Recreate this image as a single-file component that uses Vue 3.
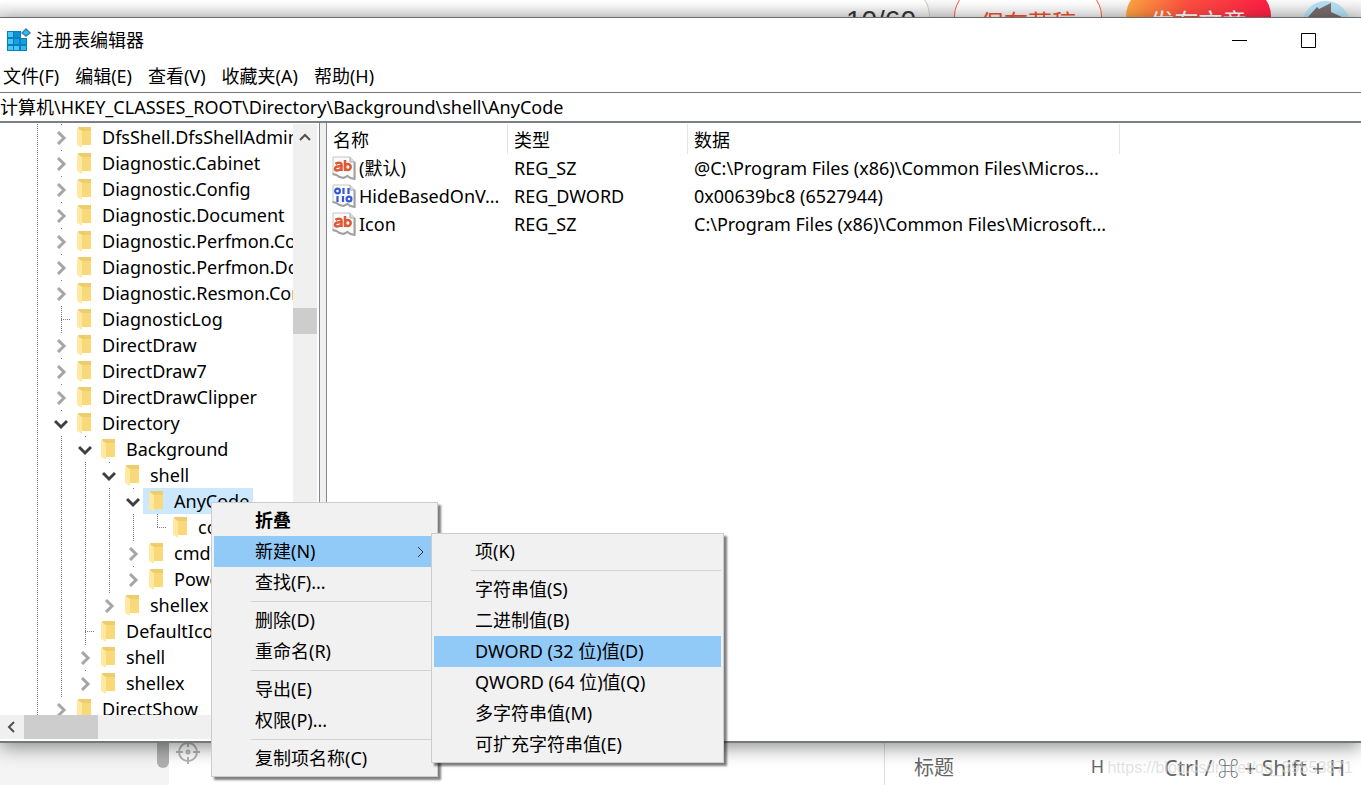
<script setup>
const menus = ['文件(F)', '编辑(E)', '查看(V)', '收藏夹(A)', '帮助(H)']

// guides: one entry per ancestor column that carries a dotted line
const tree = [
  ...['DfsShell.DfsShellAdmin', 'Diagnostic.Cabinet', 'Diagnostic.Config', 'Diagnostic.Document',
    'Diagnostic.Perfmon.Config', 'Diagnostic.Perfmon.Document', 'Diagnostic.Resmon.Config']
    .map((name) => ({ name, guides: 1, state: 'closed' })),
  { name: 'DiagnosticLog', guides: 1, state: 'leaf' },
  { name: 'DirectDraw', guides: 1, state: 'closed' },
  { name: 'DirectDraw7', guides: 1, state: 'closed' },
  { name: 'DirectDrawClipper', guides: 1, state: 'closed' },
  { name: 'Directory', guides: 1, state: 'open' },
  { name: 'Background', guides: 2, state: 'open' },
  { name: 'shell', guides: 3, state: 'open' },
  { name: 'AnyCode', guides: 4, state: 'open', selected: true },
  { name: 'command', guides: 5, state: 'leaf', last: true },
  { name: 'cmd', guides: 4, state: 'closed' },
  { name: 'Powershell', guides: 4, state: 'closed', last: true },
  { name: 'shellex', guides: 3, state: 'closed', last: true },
  { name: 'DefaultIcon', guides: 2, state: 'leaf' },
  { name: 'shell', guides: 2, state: 'closed' },
  { name: 'shellex', guides: 2, state: 'closed', last: true },
  { name: 'DirectShow', guides: 1, state: 'closed' },
]

const values = [
  { name: '(默认)', kind: 'text', type: 'REG_SZ', data: '@C:\\Program Files (x86)\\Common Files\\Micros...' },
  { name: 'HideBasedOnV...', kind: 'binary', type: 'REG_DWORD', data: '0x00639bc8 (6527944)' },
  { name: 'Icon', kind: 'text', type: 'REG_SZ', data: 'C:\\Program Files (x86)\\Common Files\\Microsoft...' },
]

const contextMenu = [
  ['折叠', '新建(N)', '查找(F)...'],
  ['删除(D)', '重命名(R)'],
  ['导出(E)', '权限(P)...'],
  ['复制项名称(C)'],
]
const newMenu = [
  ['项(K)'],
  ['字符串值(S)', '二进制值(B)', 'DWORD (32 位)值(D)', 'QWORD (64 位)值(Q)', '多字符串值(M)', '可扩充字符串值(E)'],
]
</script>

<template>
  <div class="desktop">
    <header class="editor-bar">
      <span class="count">10/60</span>
      <button class="pill draft">保存草稿</button>
      <button class="pill publish">发布文章</button>
      <svg class="avatar" viewBox="0 0 48 48" aria-hidden="true">
        <circle cx="24" cy="24" r="24" fill="#b3dff0" />
        <path d="m6 16 9-10 2 2 12-6v9l11 5 2 24H4z" fill="#786a6a" />
      </svg>
    </header>

    <main class="window">
      <div class="title-bar">
        <svg class="app-icon" viewBox="0 0 24 24" aria-hidden="true">
          <path d="M0 3h14v7h6v13H0z" fill="#0a7fc0" />
          <path d="M1 4h5v5H1zM1 11h5v5H1zM1 18h5v4H1zM7 18h5v4H7z" fill="#46c8f5" />
          <path d="M7 4h6v5H7z" fill="#0b8fd0" />
          <path d="M7 11h5v5H7zM14 11h5v5h-5z" fill="#12a3df" />
          <path d="M14 18h5v4h-5z" fill="#2fb9ee" />
          <path d="m19 0 5 5-5 4-5-4z" fill="#2b86b4" />
          <path d="m19 2 3 3-3 2-3-2z" fill="#42b7e4" />
        </svg>
        <h1>注册表编辑器</h1>
        <div class="window-buttons">
          <button aria-label="最小化"><svg viewBox="0 0 16 16"><path d="M0 8.500h15" /></svg></button>
          <button aria-label="最大化"><svg viewBox="0 0 16 16"><path d="M.5 1.500h14v14H.5z" /></svg></button>
        </div>
      </div>

      <nav class="menu-bar">
        <button v-for="m in menus" :key="m">{{ m }}</button>
      </nav>

      <input class="address" aria-label="路径" value="计算机\HKEY_CLASSES_ROOT\Directory\Background\shell\AnyCode" />

      <div class="panes">
        <section class="tree-pane">
          <div class="tree-area">
            <ul class="tree">
              <li v-for="(n, i) in tree" :key="i" class="node">
                <span v-for="g in n.guides" :key="g" class="guide"></span>
                <span class="joint" :class="[n.state, { last: n.last }]">
                  <svg v-if="n.state === 'closed'" class="chevron" viewBox="0 0 14 14"><path d="m4 1 6 6-6 6" /></svg>
                  <svg v-if="n.state === 'open'" class="chevron" viewBox="0 0 14 14"><path d="m1 4 6 6 6-6" /></svg>
                </span>
                <button class="label" :class="{ selected: n.selected }">
                  <svg class="folder" viewBox="0 0 14 21" aria-hidden="true">
                    <path d="M1 0h13v18H5z" fill="#f0cd6c" />
                    <path d="M5 4h9v14H5z" fill="#fad978" />
                    <path d="m0 1 5 3v17l-5-3z" fill="#ffe9a2" />
                  </svg>
                  {{ n.name }}
                </button>
              </li>
            </ul>
            <div class="scroll-v">
              <button aria-label="向上滚动"><svg viewBox="0 0 14 14"><path d="m2 10 5-5 5 5" /></svg></button>
              <span class="thumb"></span>
            </div>
          </div>
          <div class="scroll-h">
            <button aria-label="向左滚动"><svg viewBox="0 0 14 14"><path d="M9 2 4 7l5 5" /></svg></button>
            <span class="thumb"></span>
          </div>
        </section>

        <section class="list-pane">
          <table>
            <thead>
              <tr><th class="name">名称</th><th class="type">类型</th><th class="data">数据</th></tr>
            </thead>
            <tbody>
              <tr v-for="v in values" :key="v.name">
                <td class="name">
                  <span class="entry">
                    <svg class="value-icon" viewBox="0 0 24 24" aria-hidden="true">
                      <path d="M1 1h17l5 5v17l-4-1-3-2-4 2-4-1-3-2-4-1z" fill="#fafafa" stroke="#c4c4c4" />
                      <path d="M22.500 6v17l-4-1-3-2-4 2-4-1-3-2-4-1" fill="none" stroke="#a0a0a0" stroke-width="2" />
                      <path d="M18 1v5h5" fill="#ddd" stroke="#aaa" />
                      <g v-if="v.kind === 'text'" fill="none" stroke="#dd5a35" stroke-width="2.500">
                        <path d="M3.500 8c2-2 6-1.500 6 1v6M9 10.500c-4-.5-6 .5-6 2.200 0 2.300 4 2.300 6 0M13 4v11" />
                        <circle cx="15.800" cy="11" r="2.900" />
                      </g>
                      <g v-else fill="none" stroke="#3558d8" stroke-width="2.200">
                        <circle cx="5.500" cy="7" r="2.400" />
                        <circle cx="17" cy="15" r="2.400" />
                        <path d="M11.500 4v6M16.500 4v6M5.500 12v6M11 12v6" />
                      </g>
                    </svg>
                    {{ v.name }}
                  </span>
                </td>
                <td>{{ v.type }}</td>
                <td>{{ v.data }}</td>
              </tr>
            </tbody>
          </table>
        </section>
      </div>
    </main>

    <footer class="page-foot">
      <div class="foot-left"><span class="foot-thumb"></span></div>
      <div class="foot-mid">
        <svg class="target" viewBox="0 0 26 40" aria-hidden="true">
          <circle cx="13" cy="13" r="9" />
          <circle cx="13" cy="13" r="1.500" />
          <path d="M13 1v7M13 18v7M1 13h7M18 13h7" />
        </svg>
      </div>
      <div class="foot-help">
        <span class="topic">标题</span>
        <span class="key">H</span>
        <span class="combo">Ctrl / ⌘ + Shift + H</span>
      </div>
      <span class="watermark">https://blog.csdn.net/qq_39553871</span>
    </footer>

    <div class="menu context" role="menu">
      <template v-for="(group, gi) in contextMenu" :key="gi">
        <hr v-if="gi" />
        <button v-for="(item, ii) in group" :key="item" role="menuitem"
          :class="{ bold: gi === 0 && ii === 0, active: gi === 0 && ii === 1 }">
          {{ item }}
          <svg v-if="gi === 0 && ii === 1" class="more" viewBox="0 0 8 12"><path d="m1 1 5 5-5 5" /></svg>
        </button>
      </template>
      <div class="menu sub" role="menu">
        <template v-for="(group, gi) in newMenu" :key="gi">
          <hr v-if="gi" />
          <button v-for="item in group" :key="item" role="menuitem" :class="{ active: item.startsWith('DWORD') }">{{ item }}</button>
        </template>
      </div>
    </div>
  </div>
</template>

<style>
body {
  margin: 0;
  overflow: hidden;
}
</style>

<style scoped>
* {
  box-sizing: border-box;
}
.desktop {
  position: relative;
  display: grid;
  grid-template-rows: 17px minmax(0, 1fr) 42px;
  height: 100vh;
  overflow: hidden;
  font-family: "Noto Sans", "Noto Sans CJK SC", sans-serif;
  font-size: 18px;
  line-height: 26px;
  color: #000;
  background: #fff;
}
button {
  border: 0;
  padding: 0;
  margin: 0;
  background: none;
  color: inherit;
  font: inherit;
  white-space: nowrap;
}
svg {
  flex: none;
}

/* page behind the window, top edge */
.editor-bar {
  display: flex;
  justify-content: flex-end;
  align-items: flex-start;
  overflow: hidden;
  background: linear-gradient(#fbfbfb, #dedede);
}
.count {
  flex: 1;
  height: 60px;
  margin-top: -14px;
  padding: 20px 13px 0 0;
  border: 1px solid #ccc;
  border-left: 0;
  border-radius: 0 30px 30px 0;
  background: linear-gradient(#fff 14px, #e4e4e4 32px);
  font-family: "Liberation Sans", sans-serif;
  font-size: 28px;
  line-height: 28px;
  text-align: right;
  color: #333;
}
.pill {
  height: 56px;
  margin-top: -12px;
  padding-top: 12px;
  border-radius: 28px;
  font-size: 24px;
  line-height: 44px;
}
.draft {
  width: 148px;
  margin-left: 24px;
  border: 1px solid #fc5531;
  background: linear-gradient(#fff 12px, #eee 30px);
  color: #f04c2a;
}
.publish {
  width: 145px;
  margin: -12px 31px 0 24px;
  background: linear-gradient(100deg, #fbaa40, #fc5040 40%, #fc1944);
  color: #fff;
}
.avatar {
  width: 48px;
  height: 48px;
  margin: 1px 11px 0 0;
}

/* registry editor window */
.window {
  z-index: 1;
  display: flex;
  flex-direction: column;
  min-height: 0;
  border-top: 1px solid #6a6a6a;
  border-bottom: 2px solid #74777c;
  background: #fff;
  box-shadow: 0 4px 18px rgba(0, 0, 0, 0.45);
}
.title-bar {
  display: flex;
  align-items: center;
  height: 43px;
  padding-left: 7px;
}
.app-icon {
  width: 24px;
  height: 24px;
}
h1 {
  flex: 1;
  margin: 0 0 0 5px;
  font-size: 18px;
  font-weight: 400;
}
.window-buttons {
  display: flex;
  padding-right: 18px;
}
.window-buttons button {
  display: flex;
  align-items: center;
  justify-content: center;
  width: 69px;
  height: 42px;
}
.window-buttons svg {
  width: 16px;
  height: 16px;
  fill: none;
  stroke: #000;
}
.menu-bar {
  display: flex;
  gap: 16px;
  height: 31px;
  padding: 2px 3px 3px;
}
.address {
  width: 100%;
  height: 29px;
  padding: 0 0 2px;
  border: 0;
  border-top: 1px solid #74777c;
  border-radius: 0;
  background: #fff;
  color: #000;
  font: inherit;
  outline: 0;
}
.panes {
  flex: 1;
  display: flex;
  min-height: 0;
  background: #f0f0f0;
  border-top: 2px solid #7c7f85;
}
.tree-pane {
  display: flex;
  flex-direction: column;
  width: 320px;
  padding: 1px 2px 2px 0;
  border-right: 1px solid #828790;
  background: #fff;
}
.tree-area {
  flex: 1;
  display: flex;
  min-height: 0;
}
.tree {
  flex: 1;
  min-width: 0;
  margin: 0;
  padding: 0 0 0 25px;
  overflow: hidden;
  list-style: none;
}
.node {
  display: flex;
  height: 26px;
}
.guide,
.joint {
  flex: none;
  width: 24px;
  background: repeating-linear-gradient(#808080 0 1px, transparent 1px 2px) 12px 0 / 1px 100% no-repeat;
}
.joint {
  display: flex;
  align-items: center;
  width: 22px;
}
.joint.leaf {
  background:
    repeating-linear-gradient(#808080 0 1px, transparent 1px 2px) 12px 0 / 1px 100% no-repeat,
    repeating-linear-gradient(90deg, #808080 0 1px, transparent 1px 2px) 12px 13px / 12px 1px no-repeat;
}
.joint.leaf.last {
  background-size: 1px 14px, 12px 1px;
}
.joint.closed,
.joint.open {
  background-size: 1px 1px;
}
.chevron {
  width: 14px;
  height: 14px;
  margin: 2px 0 0 5px;
  fill: none;
  stroke: #a6a6a6;
  stroke-width: 3;
}
.open .chevron {
  stroke: #404040;
}
.label {
  display: flex;
  align-items: center;
  gap: 11px;
  height: 26px;
  padding: 0 4px 0 6px;
}
.label.selected {
  background: #cce8ff;
}
.folder {
  width: 14px;
  height: 21px;
}
.scroll-v,
.scroll-h {
  display: flex;
  flex: none;
  background: #f0f0f0;
}
.scroll-v {
  flex-direction: column;
  gap: 158px;
  width: 24px;
}
.scroll-h {
  height: 24px;
}
.scroll-v button,
.scroll-h button {
  display: flex;
  align-items: center;
  justify-content: center;
  width: 24px;
  height: 26px;
}
.scroll-h button {
  height: 24px;
}
.scroll-v svg,
.scroll-h svg {
  width: 14px;
  height: 14px;
  fill: none;
  stroke: #505050;
  stroke-width: 2;
}
.thumb {
  height: 26px;
  background: #cdcdcd;
}
.scroll-h .thumb {
  width: 74px;
  height: 24px;
}
.list-pane {
  flex: 1;
  min-width: 0;
  margin-left: 6px;
  padding-top: 1px;
  border-left: 1px solid #828790;
  background: #fff;
}
table {
  table-layout: fixed;
  width: 793px;
  border-collapse: separate;
  border-spacing: 0;
}
th {
  height: 30px;
  padding: 2px 0 0 6px;
  border-right: 1px solid #e5e5e5;
  font-weight: 400;
  text-align: left;
}
th.name {
  width: 181px;
}
th.type {
  width: 180px;
}
td {
  height: 28px;
  padding: 0 0 0 6px;
  white-space: nowrap;
}
td.name {
  padding-left: 5px;
}
.entry {
  display: flex;
  align-items: center;
  gap: 3px;
}
.value-icon {
  width: 24px;
  height: 24px;
}

/* page behind the window, bottom edge */
.page-foot {
  position: relative;
  display: flex;
  overflow: hidden;
  color: #666;
}
.foot-left {
  display: flex;
  justify-content: flex-end;
  width: 169px;
  background: #f4f4f4;
}
.foot-thumb {
  width: 12px;
  height: 25px;
  border-radius: 0 0 6px 6px;
  background: #b0b0b0;
}
.foot-mid {
  flex: 1;
}
.target {
  width: 26px;
  height: 40px;
  margin: -4px 0 0 6px;
  fill: none;
  stroke: #b4b4b4;
  stroke-width: 2;
}
.foot-help {
  display: flex;
  align-items: center;
  width: 477px;
  padding: 7px 16px 0 29px;
  border-left: 1px solid #ddd;
}
.topic {
  flex: 1;
  font-size: 20px;
}
.key {
  margin: 0 60px 4px 0;
}
.combo {
  font-size: 21px;
}
.watermark {
  position: absolute;
  right: 8px;
  top: 12px;
  font-family: "Liberation Sans", sans-serif;
  font-size: 16px;
  color: rgba(215, 215, 215, 0.7);
}

/* popup menus */
.menu {
  position: absolute;
  z-index: 2;
  display: flex;
  flex-direction: column;
  padding: 2px;
  border: 1px solid #ccc;
  background: #f1f1f1;
  box-shadow: 3px 3px 2px rgba(0, 0, 0, 0.5);
}
.context {
  left: 211px;
  top: 502px;
  width: 227px;
}
.sub {
  left: 219px;
  top: 30px;
  width: 293px;
}
.menu button {
  display: flex;
  align-items: center;
  justify-content: space-between;
  height: 31px;
  padding: 0 10px 2px 41px;
  text-align: left;
}
.menu .bold {
  font-weight: 700;
}
.menu .active {
  background: #91c9f7;
}
.menu hr {
  width: auto;
  height: 1px;
  margin: 3px 0 3px 37px;
  border: 0;
  background: #d2d2d2;
}
.more {
  width: 8px;
  height: 12px;
  margin-top: 2px;
  fill: none;
  stroke: #333;
}
</style>
